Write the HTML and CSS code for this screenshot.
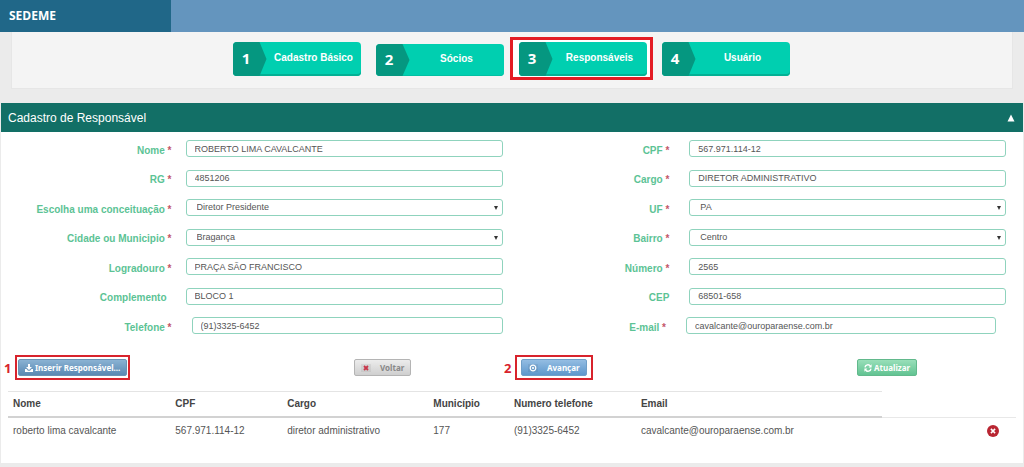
FILE: index.html
```html
<!DOCTYPE html>
<html lang="pt-BR">
<head>
<meta charset="utf-8">
<title>SEDEME - Cadastro de Responsável</title>
<link rel="stylesheet" href="styles.css">
</head>
<body>
<header class="topbar"><div class="brand">SEDEME</div></header>

<nav class="steps-panel" aria-label="Etapas do cadastro">
  <ol class="steps">
    <li class="step"><button type="button" class="step-btn"><span class="step-num">1</span><span class="step-label">Cadastro Básico</span></button></li>
    <li class="step"><button type="button" class="step-btn step-btn-flat"><span class="step-num">2</span><span class="step-label">Sócios</span></button></li>
    <li class="step step-marked"><button type="button" class="step-btn"><span class="step-num">3</span><span class="step-label">Responsáveis</span></button></li>
    <li class="step"><button type="button" class="step-btn"><span class="step-num">4</span><span class="step-label">Usuário</span></button></li>
  </ol>
</nav>

<main class="panel">
  <div class="panel-head">
    <h1 class="panel-title">Cadastro de Responsável</h1>
    <button type="button" class="collapse" aria-label="Recolher"><svg width="8" height="8" viewBox="0 0 8 8"><path d="M4 0.5 7.5 7.5H0.5Z" fill="#fff"/></svg></button>
  </div>

  <form class="form">
    <div class="col col-left">
      <div class="row"><label for="nome">Nome <b class="req">*</b></label><div class="field"><input id="nome" type="text" value="ROBERTO LIMA CAVALCANTE"></div></div>
      <div class="row"><label for="rg">RG <b class="req">*</b></label><div class="field"><input id="rg" type="text" value="4851206"></div></div>
      <div class="row"><label for="conc">Escolha uma conceituação <b class="req">*</b></label><div class="field field-select"><select id="conc"><option>Diretor Presidente</option></select></div></div>
      <div class="row"><label for="cidade">Cidade ou Municipio <b class="req">*</b></label><div class="field field-select"><select id="cidade"><option>Bragança</option></select></div></div>
      <div class="row"><label for="log">Logradouro <b class="req">*</b></label><div class="field"><input id="log" type="text" value="PRAÇA SÃO FRANCISCO"></div></div>
      <div class="row"><label class="plain" for="comp">Complemento</label><div class="field"><input id="comp" type="text" value="BLOCO 1"></div></div>
      <div class="row row-phone"><label for="tel">Telefone <b class="req">*</b></label><div class="field"><input id="tel" type="tel" value="(91)3325-6452"></div></div>
    </div>
    <div class="col col-right">
      <div class="row"><label for="cpf">CPF <b class="req">*</b></label><div class="field"><input id="cpf" type="text" value="567.971.114-12"></div></div>
      <div class="row"><label for="cargo">Cargo <b class="req">*</b></label><div class="field"><input id="cargo" type="text" value="DIRETOR ADMINISTRATIVO"></div></div>
      <div class="row"><label for="uf">UF <b class="req">*</b></label><div class="field field-select"><select id="uf"><option>PA</option></select></div></div>
      <div class="row"><label for="bairro">Bairro <b class="req">*</b></label><div class="field field-select"><select id="bairro"><option>Centro</option></select></div></div>
      <div class="row"><label for="num">Número <b class="req">*</b></label><div class="field"><input id="num" type="text" value="2565"></div></div>
      <div class="row"><label for="cep">CEP</label><div class="field"><input id="cep" type="text" value="68501-658"></div></div>
      <div class="row row-mail"><label for="email">E-mail <b class="req">*</b></label><div class="field"><input id="email" type="email" value="cavalcante@ouroparaense.com.br"></div></div>
    </div>
  </form>

  <div class="actions">
    <div class="action"><span class="mark-num">1</span><span class="mark"><button type="button" class="btn btn-insert"><svg width="8" height="8" viewBox="0 0 8 8"><path d="M3 0h2v3h2L4 6 1 3h2ZM0 5h1.5L3 6.7h2L6.5 5H8v3H0Z" fill="#fff"/></svg>Inserir Responsável...</button></span></div>
    <div class="action"><button type="button" class="btn btn-back"><span class="icon-box"><svg width="6" height="6" viewBox="0 0 6 6"><path d="M1 1 5 5M5 1 1 5" stroke="#c8364a" stroke-width="1.8"/></svg></span>Voltar</button></div>
    <div class="action"><span class="mark-num">2</span><span class="mark mark-wide"><button type="button" class="btn btn-next"><span class="icon-box"><svg width="8" height="8" viewBox="0 0 8 8"><circle cx="4" cy="4" r="2.8" fill="none" stroke="#fff" stroke-width="1.2"/><circle cx="4" cy="4" r="1.1" fill="#fff"/></svg></span>Avançar</button></span></div>
    <div class="action"><button type="button" class="btn btn-refresh"><svg width="8" height="8" viewBox="0 0 8 8"><path d="M1 3.4A3 3 0 0 1 6.4 2M7 4.6A3 3 0 0 1 1.6 6" fill="none" stroke="#fff" stroke-width="1.4"/><path d="M7.6 0.2V3.4H4.6ZM0.4 7.8V4.6H3.4Z" fill="#fff"/></svg>Atualizar</button></div>
  </div>

  <div class="table-wrap">
    <table class="list">
      <colgroup><col class="c-nome"><col class="c-cpf"><col class="c-cargo"><col class="c-mun"><col class="c-tel"><col class="c-email"><col></colgroup>
      <thead><tr><th>Nome</th><th>CPF</th><th>Cargo</th><th>Município</th><th>Numero telefone</th><th>Email</th><td class="empty"></td></tr></thead>
      <tbody><tr><td>roberto lima cavalcante</td><td>567.971.114-12</td><td>diretor administrativo</td><td>177</td><td>(91)3325-6452</td><td>cavalcante@ouroparaense.com.br</td><td class="remove-cell"><button type="button" class="remove" aria-label="Remover"><svg width="12" height="12" viewBox="0 0 12 12"><circle cx="6" cy="6" r="6" fill="#b92632"/><path d="M3.9 3.9 8.1 8.1M8.1 3.9 3.9 8.1" stroke="#fff" stroke-width="1.5"/></svg></button></td></tr></tbody>
    </table>
  </div>
</main>
</body>
</html>
```
FILE: styles.css
```css
* { box-sizing: border-box; }
body { margin: 0; background: #ebebeb; font-family: "Liberation Sans", Arial, sans-serif; color: #555; }
button { font-family: inherit; margin: 0; cursor: pointer; }
svg { display: block; flex: none; }

.topbar { height: 32px; background: #6495be; }
.brand { width: 171px; height: 32px; padding-left: 9px; background: #206788; color: #fff; font: bold 12px/32px "Open Sans", sans-serif; }

.steps-panel { margin: 0 11px; padding: 10px 2px 12px 0; background: #f4f4f4; border: 1px solid #e6e6e6; border-top: 0; }
.steps { display: flex; justify-content: center; align-items: flex-end; gap: 15px; margin: 0; padding: 0; list-style: none; }
.step { position: relative; }
.step-btn { display: flex; width: 128px; height: 34px; padding: 0; border: 0; border-radius: 4px; overflow: hidden; background: #00cfb0; color: #fff; box-shadow: inset 0 -2px 0 #02b094; }
.step-btn-flat { height: 32px; box-shadow: inset 0 -1px 0 #02c0a3; }
.step-num { width: 34px; height: 100%; padding: 0 7px 2px 0; display: flex; align-items: center; justify-content: center; background: #059780; clip-path: polygon(0 0, 27px 0, 100% 50%, 27px 100%, 0 100%); font: bold 15px/20px "Open Sans", sans-serif; }
.step-label { flex: 1; align-self: center; padding: 0 0 2px; text-align: center; white-space: nowrap; font-size: 10px; font-weight: bold; line-height: 14px; }
.step-marked { z-index: 0; }
.step-marked::after { content: ""; position: absolute; z-index: -1; inset: -5px -6px -4px -9px; border: 3px solid #e31c24; background: #fff; }

.panel { margin: 14px 1px 0; padding-bottom: 20px; background: #fff; }
.panel-head { display: flex; align-items: center; justify-content: space-between; height: 29px; padding: 0 8px 0 7px; background: #126f66; }
.panel-title { margin: 0; color: #fff; font-size: 12px; font-weight: normal; }
.collapse { padding: 0; border: 0; background: none; }

.form { display: grid; grid-template-columns: 1fr 1fr; padding: 8px 17px 0 0; }
.col { display: flex; flex-direction: column; justify-content: space-between; min-height: 194px; }
.col-left { padding-right: 1px; }
.row { display: flex; align-items: center; }
.row label { flex: none; width: 34%; text-align: right; white-space: nowrap; color: #5cc395; font-size: 10px; font-weight: bold; line-height: 13px; padding: 3px 0 0; }
.row label.plain { padding-right: 5px; }
.req { color: #c4566a; }
.field { position: relative; flex: 1; margin-left: 14px; }
.row-phone .field { margin-left: 20px; }
.col-right label { width: 33%; }
.col-right .field { margin-left: 20px; }
.row-mail { padding-right: 10px; }
.field input, .field select { display: block; width: 100%; height: 17px; padding: 0 8px; border: 1px solid #8fd3bd; border-radius: 3px; background: #fff; color: #555; font-family: inherit; font-size: 9px; line-height: 13px; }
.field select { appearance: none; padding: 0 10px; }
.field-select::after { content: ""; position: absolute; right: 5px; top: 7px; border: 2px solid transparent; border-top: 4px solid #333; border-bottom: 0; pointer-events: none; }

.actions { display: grid; grid-template-columns: 350fr 150fr 353fr 162fr; align-items: center; padding: 21px 4px 0 3px; }
.action { display: flex; align-items: center; }
.mark-num { width: 11px; color: #d8232c; font: bold 13px/16px "Open Sans", sans-serif; }
.mark { padding: 2px 1px; border: 2px solid #d8232c; }
.mark-wide { padding: 2px 4px; }
.btn { display: flex; align-items: center; justify-content: center; gap: 2px; height: 17px; padding: 0 6px; border: 1px solid; border-radius: 2px; color: #fff; font: bold 8px/12px "Noto Sans", "DejaVu Sans", sans-serif; white-space: nowrap; }
.btn-insert { border-color: #6b93b4; background: linear-gradient(#8ab2d3, #5a89b3); }
.btn-back { border-color: #b4b4b4; background: linear-gradient(#ececec, #cfcfcf); color: #888; gap: 9px; }
.btn-next { border-color: #6f9fc8; background: linear-gradient(#93bde2, #5e97cc); gap: 9px; }
.btn-refresh { border-color: #62b98c; background: linear-gradient(#98dfb9, #62c392); }
.icon-box { display: flex; align-items: center; justify-content: center; width: 10px; height: 8px; background: rgba(0, 0, 0, .06); }

.table-wrap { padding: 11px 7px 0; }
.list { width: 100%; table-layout: fixed; border-collapse: separate; border-spacing: 0; font-size: 10px; line-height: 14px; }
.list th { padding: 5px; text-align: left; white-space: nowrap; color: #444; border-top: 1px solid #e4e4e4; border-bottom: 2px solid #d2d2d2; }
.list td { padding: 5px; white-space: nowrap; }
.list tbody td { padding-top: 6px; }
.list .empty { border-bottom: 1px solid #e8e8e8; }
.c-nome { width: 16.1%; }
.c-cpf { width: 11.1%; }
.c-cargo { width: 14.5%; }
.c-mun { width: 8%; }
.c-tel { width: 12.6%; }
.c-email { width: 24.4%; }
.list .remove-cell { padding-right: 17px; }
.remove { display: block; margin-left: auto; padding: 0; border: 0; background: none; }
```
